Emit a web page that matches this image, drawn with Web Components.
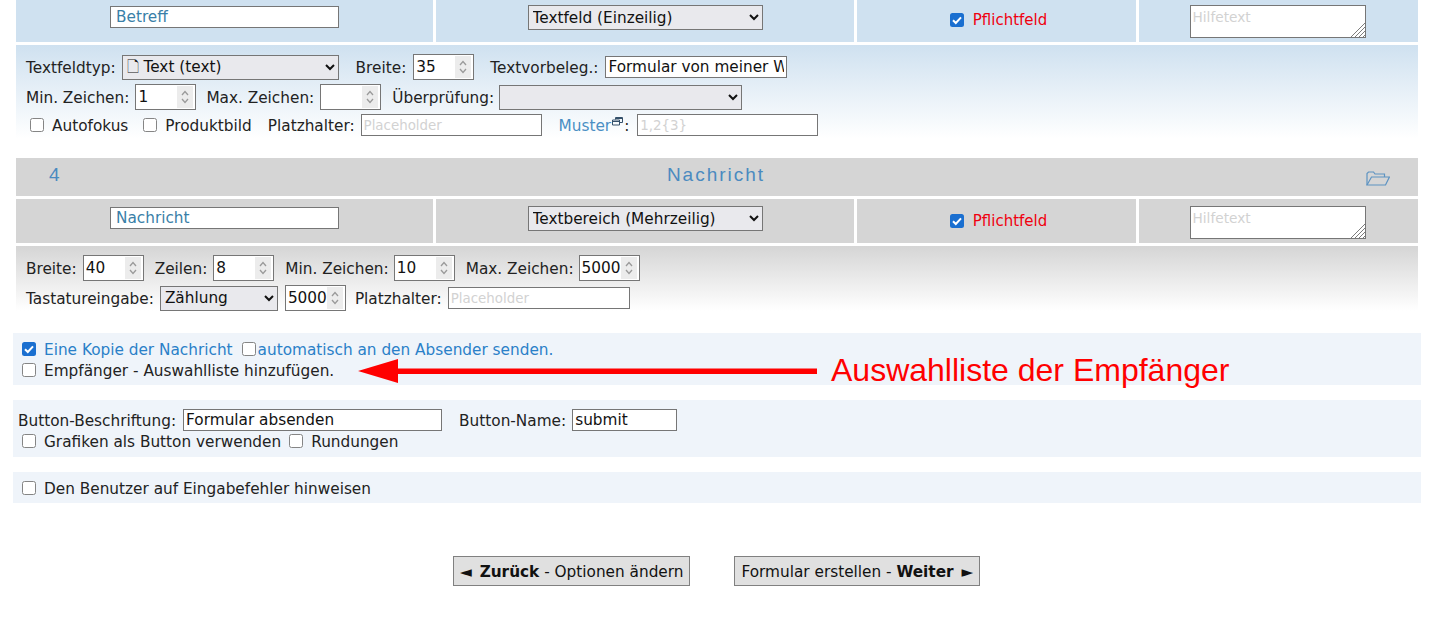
<!DOCTYPE html>
<html lang="de">
<head>
<meta charset="utf-8">
<title>Formular</title>
<style>
  html, body { margin: 0; padding: 0; background: #fff; overflow: hidden; }
  body { font: 15.3px/18px "DejaVu Sans", Verdana, sans-serif; color: #222; }
  .tri { margin: 0 3px; }
  .tri:first-child { margin-left: 0; }
  .tri:last-child { margin-right: 0; }
</style>
</head>
<body>
<form-page>
  <field-row name="Betreff" type="Textfeld (Einzeilig)" tone="#cfe1f0"></field-row>
  <field-panel tone="#cfe1f0" height="110" top="9">
    <panel-line>
      <span>Textfeldtyp:</span>
      <plain-select width="217" options="🗋 Text (text)"></plain-select>
      <span class="s17">Breite:</span>
      <num-field class="s7" value="35"></num-field>
      <span class="s16">Textvorbeleg.:</span>
      <plain-text class="s7" width="182" value="Formular von meiner Website"></plain-text>
    </panel-line>
    <panel-line>
      <span>Min. Zeichen:</span>
      <num-field value="1"></num-field>
      <span class="s10">Max. Zeichen:</span>
      <num-field value=""></num-field>
      <span class="s11">Überprüfung:</span>
      <plain-select class="s5" width="243" options=""></plain-select>
    </panel-line>
    <panel-line>
      <check-label class="i4">Autofokus</check-label>
      <check-label class="s15">Produktbild</check-label>
      <span class="s16">Platzhalter:</span>
      <plain-text width="181" placeholder="Placeholder"></plain-text>
      <span class="s17"><link-text>Muster</link-text><window-icon></window-icon>:</span>
      <plain-text class="s8" width="181" placeholder="1,2{3}"></plain-text>
    </panel-line>
  </field-panel>

  <section-head number="4" title="Nachricht"></section-head>
  <field-row name="Nachricht" type="Textbereich (Mehrzeilig)" tone="#d5d5d5"></field-row>
  <field-panel tone="#d5d5d5" height="76" top="9">
    <panel-line>
      <span>Breite:</span>
      <num-field value="40"></num-field>
      <span class="s11">Zeilen:</span>
      <num-field value="8"></num-field>
      <span class="s11">Min. Zeichen:</span>
      <num-field class="s5" value="10"></num-field>
      <span class="s11">Max. Zeichen:</span>
      <num-field class="s5" value="5000"></num-field>
    </panel-line>
    <panel-line>
      <span>Tastatureingabe:</span>
      <plain-select width="118" options="Zählung"></plain-select>
      <num-field class="s7" value="5000"></num-field>
      <span class="s9">Platzhalter:</span>
      <plain-text width="182" placeholder="Placeholder"></plain-text>
    </panel-line>
  </field-panel>

  <option-box style="--box-top:11px;--box-height:52px;--box-pad:5px">
    <panel-line tight>
      <check-label checked blue>Eine Kopie der Nachricht</check-label>
      <check-label class="s9" blue narrow>automatisch an den Absender senden.</check-label>
    </panel-line>
    <panel-line tight>
      <check-label>Empfänger - Auswahlliste hinzufügen.</check-label>
    </panel-line>
  </option-box>

  <option-box style="--box-top:15px;--box-height:57px;--box-pad:9px">
    <panel-line tight>
      <span class="lead">Button-Beschriftung:</span>
      <plain-text class="s7" width="259" value="Formular absenden"></plain-text>
      <span class="s17">Button-Name:</span>
      <plain-text width="105" value="submit"></plain-text>
    </panel-line>
    <panel-line tight>
      <check-label>Grafiken als Button verwenden</check-label>
      <check-label class="s8">Rundungen</check-label>
    </panel-line>
  </option-box>

  <option-box style="--box-top:15px;--box-height:31px;--box-pad:5px">
    <panel-line tight>
      <check-label>Den Benutzer auf Eingabefehler hinweisen</check-label>
    </panel-line>
  </option-box>

  <nav-bar>
    <nav-button><span class="tri">◄</span> <b>Zurück</b> - Optionen ändern</nav-button>
    <nav-button>Formular erstellen - <b>Weiter</b> <span class="tri">►</span></nav-button>
  </nav-bar>

  <callout-arrow>Auswahlliste der Empfänger</callout-arrow>
</form-page>

<script>
// shared look of the checkboxes, the old Chromium style with the heavy grey edge
const CHECK_CSS = `
  input[type=checkbox] {
    appearance: none; box-sizing: border-box; width: 14px; height: 14px; margin: 0; flex: none;
    border: 1.5px solid #858585; border-radius: 2.500px; background: #fff;
  }
  input[type=checkbox]:checked {
    border: 0;
    background: #1a6fd0 url("data:image/svg+xml,%3Csvg xmlns='http://www.w3.org/2000/svg' viewBox='0 0 14 14'%3E%3Cpath d='M3 7.200l2.800 2.800L11 4.300' fill='none' stroke='%23fff' stroke-width='2'/%3E%3C/svg%3E");
  }`;

class FormPage extends HTMLElement {
  constructor() {
    super();
    this.attachShadow({ mode: "open" }).innerHTML = `
      <style>
        :host { display: block; position: relative; margin-top: -2px; }
      </style>
      <slot></slot>`;
  }
}

class FieldRow extends HTMLElement {
  constructor() {
    super();
    const tone = this.getAttribute("tone");
    this.attachShadow({ mode: "open" }).innerHTML = `
      <style>
        :host {
          display: grid;
          grid-template-columns: 417px 418px 279px 279px;
          column-gap: 3px;
          margin: 0 0 3px 16px;
          width: 1402px;
          height: 44px;
          font: 15.3px/18px "DejaVu Sans", Verdana, sans-serif;
        }
        .cell { background: ${tone}; display: flex; justify-content: center; align-items: flex-start; padding-top: 7px; box-sizing: border-box; }
        input[type=text] {
          width: 229px; height: 22px; box-sizing: border-box; margin: 1px 0 0;
          border: 1px solid #767676; padding: 1px 5px; background: #fff;
          font: inherit; color: #3a7fa8; outline: 0;
        }
        select {
          width: 235px; height: 25px; box-sizing: border-box; margin: 0;
          border: 1px solid #767676; border-radius: 0; background-color: #e9e9ed;
          font: inherit; color: #111; padding-left: 0;
        }
        .req { padding-top: 13px; padding-left: 4px; color: #f0000f; font-size: 15px; }
        .req label { display: flex; align-items: center; gap: 9px; }
        ${CHECK_CSS}
        .help { padding-right: 2px; }
        .note { position: relative; height: 33px; }
        textarea {
          display: block; width: 176px; height: 33px; box-sizing: border-box; margin: 0;
          border: 1px solid #767676; padding: 3px 2px 2px 2px; background: #fff; resize: none;
          font: 13.7px/17px "DejaVu Sans", Verdana, sans-serif; outline: 0;
        }
        textarea::placeholder { color: #d2d2d2; }
        .grip { position: absolute; right: 1px; bottom: 1px; display: block; }
      </style>
      <div class="cell"><input type="text" value="${this.getAttribute("name")}"></div>
      <div class="cell"><select><option>${this.getAttribute("type")}</option></select></div>
      <div class="cell req"><label><input type="checkbox" checked>Pflichtfeld</label></div>
      <div class="cell help"><div class="note">
        <textarea placeholder="Hilfetext"></textarea>
        <svg class="grip" width="15" height="15" viewBox="0 0 15 15" stroke="#7c7c7c" stroke-width="1">
          <path d="M1 15L15 1M5 15L15 5M9 15l6-6M13 15l2-2"/>
        </svg>
      </div></div>`;
  }
}

class FieldPanel extends HTMLElement {
  constructor() {
    super();
    const tone = this.getAttribute("tone");
    this.attachShadow({ mode: "open" }).innerHTML = `
      <style>
        :host {
          display: flex; flex-direction: column; gap: 4px;
          box-sizing: border-box;
          margin: 0 0 3px 16px; width: 1402px;
          height: ${this.getAttribute("height")}px;
          padding: ${this.getAttribute("top")}px 0 0 10px;
          background: linear-gradient(${tone}, #fff 85%);
        }
      </style>
      <slot></slot>`;
  }
}

// one line of labels and fields; the gap before an item comes from its s-number class
class PanelLine extends HTMLElement {
  constructor() {
    super();
    this.attachShadow({ mode: "open" }).innerHTML = `
      <style>
        :host { display: flex; align-items: center; min-height: 22px; }
        :host([tight]:not(:first-child)) { margin-top: -1px; }
        ::slotted(*) { flex: none; margin-left: 6px; }
        ::slotted(span) { padding-top: 2px; }
        ::slotted(:first-child) { margin-left: 0; }
        ::slotted(.lead) { margin-left: -4px; }
        ::slotted(.i4) { margin-left: 4px; }
        ::slotted(.s5) { margin-left: 5px; }
        ::slotted(.s7) { margin-left: 7px; }
        ::slotted(.s8) { margin-left: 8px; }
        ::slotted(.s9) { margin-left: 9px; }
        ::slotted(.s10) { margin-left: 10px; }
        ::slotted(.s11) { margin-left: 11px; }
        ::slotted(.s15) { margin-left: 15px; }
        ::slotted(.s16) { margin-left: 16px; }
        ::slotted(.s17) { margin-left: 17px; }
      </style>
      <slot></slot>`;
  }
}

class PlainSelect extends HTMLElement {
  constructor() {
    super();
    const label = this.getAttribute("options");
    this.attachShadow({ mode: "open" }).innerHTML = `
      <style>
        :host { display: block; }
        select {
          display: block; box-sizing: border-box; margin: 0;
          width: ${this.getAttribute("width")}px; height: 25px;
          border: 1px solid #767676; border-radius: 0; background-color: #e9e9ed;
          font: 15.3px "DejaVu Sans", Verdana, sans-serif; color: #111; padding-left: 0;
        }
      </style>
      <select><option>${label}</option></select>`;
  }
}

class PlainText extends HTMLElement {
  constructor() {
    super();
    const value = this.getAttribute("value") || "";
    const hint = this.getAttribute("placeholder") || "";
    this.attachShadow({ mode: "open" }).innerHTML = `
      <style>
        :host { display: block; }
        input {
          display: block; box-sizing: border-box; margin: 0;
          width: ${this.getAttribute("width")}px; height: 22px;
          border: 1px solid #767676; padding: 1px 2px; background: #fff;
          font: 15.3px "DejaVu Sans", Verdana, sans-serif; color: #111; outline: 0;
        }
        input::placeholder { color: #d2d2d2; font-size: 13.4px; }
      </style>
      <input type="text" value="${value}" placeholder="${hint}">`;
  }
}

class NumField extends HTMLElement {
  constructor() {
    super();
    this.attachShadow({ mode: "open" }).innerHTML = `
      <style>
        :host {
          display: flex; box-sizing: border-box; width: 61px; height: 26px;
          border: 1px solid #767676; background: #fff; padding: 1px 2px;
        }
        input {
          flex: 1; min-width: 0; border: 0; padding: 0; margin: 0; background: none; outline: 0;
          font: 15.3px "DejaVu Sans", Verdana, sans-serif; color: #111;
        }
        svg { flex: none; width: 16px; height: 22px; background: #ececec; }
      </style>
      <input type="text" value="${this.getAttribute("value")}">
      <svg viewBox="0 0 16 22" fill="none" stroke="#9a9a9a" stroke-width="1.3">
        <path d="M5 9l3-3.500 3 3.500M5 13l3 3.500 3-3.500"/>
      </svg>`;
  }
}

class CheckLabel extends HTMLElement {
  constructor() {
    super();
    const gap = this.hasAttribute("narrow") ? 2 : 8;
    this.attachShadow({ mode: "open" }).innerHTML = `
      <style>
        :host { display: block; color: ${this.hasAttribute("blue") ? "#2a80c8" : "inherit"}; }
        label { display: flex; align-items: center; gap: ${gap}px; }
        ${CHECK_CSS}
        span { padding-top: 2px; }
      </style>
      <label><input type="checkbox" ${this.hasAttribute("checked") ? "checked" : ""}><span><slot></slot></span></label>`;
  }
}

class LinkText extends HTMLElement {
  constructor() {
    super();
    this.attachShadow({ mode: "open" }).innerHTML = `
      <style>:host { color: #4a8fc4; }</style><slot></slot>`;
  }
}

class WindowIcon extends HTMLElement {
  constructor() {
    super();
    this.attachShadow({ mode: "open" }).innerHTML = `
      <style>:host { display: inline-block; width: 11px; height: 9px; margin: 0 1px; vertical-align: 5px; }
        svg { display: block; }</style>
      <svg width="11" height="9" viewBox="0 0 11 9" fill="none" stroke="#34506a" stroke-width="1">
        <path d="M3.500 2.500v-2h7v5h-2.500"/><path d="M.5 3h7v5h-7z"/><path d="M.5 4.500h7M3.500 1.500h7"/>
      </svg>`;
  }
}

class SectionHead extends HTMLElement {
  constructor() {
    super();
    this.attachShadow({ mode: "open" }).innerHTML = `
      <style>
        :host {
          display: grid; grid-template-columns: 1fr auto 1fr; align-items: center;
          box-sizing: border-box; margin: 0 0 3px 16px; width: 1402px; height: 38px;
          background: #d5d5d5; color: #4a8ac0;
          font: 19px "Liberation Sans", Arial, sans-serif;
        }
        .num { padding-left: 33px; margin-top: -4px; }
        .title { letter-spacing: 2px; margin-top: -4px; margin-right: 2px; }
        .tools { justify-self: end; padding-right: 28px; padding-top: 2px; }
        svg { display: block; }
      </style>
      <div class="num">${this.getAttribute("number")}</div>
      <div class="title">${this.getAttribute("title")}</div>
      <div class="tools">
        <svg width="24" height="15" viewBox="0 0 24 15" fill="none" stroke="#5d93c2" stroke-width="1.2">
          <path d="M1 14V2.500L2.500 1h5L9 3h9.500v3"/>
          <path d="M1 14l4.500-8H23.400L19.500 14z"/>
        </svg>
      </div>`;
  }
}

class OptionBox extends HTMLElement {
  constructor() {
    super();
    this.attachShadow({ mode: "open" }).innerHTML = `
      <style>
        :host {
          display: block; box-sizing: border-box;
          margin: var(--box-top) 0 0 13px; width: 1408px;
          height: var(--box-height); padding: var(--box-pad) 0 0 9px;
          background: #eff4fa;
        }
      </style>
      <slot></slot>`;
  }
}

class NavBar extends HTMLElement {
  constructor() {
    super();
    this.attachShadow({ mode: "open" }).innerHTML = `
      <style>
        :host { display: flex; gap: 44px; margin: 53px 0 0 453px; }
      </style>
      <slot></slot>`;
  }
}

class NavButton extends HTMLElement {
  constructor() {
    super();
    this.attachShadow({ mode: "open" }).innerHTML = `
      <style>
        :host { display: block; }
        button {
          display: block; box-sizing: border-box; height: 30px; margin: 0; padding: 2px 6px 0;
          border: 1px solid #808080; border-radius: 0; background: #e0e0e0; color: #111;
          font: 15.3px "DejaVu Sans", Verdana, sans-serif; white-space: nowrap;
        }
      </style>
      <button type="button"><slot></slot></button>`;
  }
}

class CalloutArrow extends HTMLElement {
  constructor() {
    super();
    this.attachShadow({ mode: "open" }).innerHTML = `
      <style>
        :host {
          position: absolute; left: 358px; top: 348px; display: flex; align-items: center;
          color: #f00; font: 32px/48px "Liberation Sans", Arial, sans-serif; white-space: nowrap;
        }
        svg { display: block; margin-right: 14px; margin-top: 2px; }
      </style>
      <svg width="459" height="26" viewBox="0 0 459 26" fill="#f00">
        <path d="M0 13L40 1v9.500h419v5.500H40V25z"/>
      </svg>
      <span><slot></slot></span>`;
  }
}

customElements.define("form-page", FormPage);
customElements.define("field-row", FieldRow);
customElements.define("field-panel", FieldPanel);
customElements.define("panel-line", PanelLine);
customElements.define("plain-select", PlainSelect);
customElements.define("plain-text", PlainText);
customElements.define("num-field", NumField);
customElements.define("check-label", CheckLabel);
customElements.define("link-text", LinkText);
customElements.define("window-icon", WindowIcon);
customElements.define("section-head", SectionHead);
customElements.define("option-box", OptionBox);
customElements.define("nav-bar", NavBar);
customElements.define("nav-button", NavButton);
customElements.define("callout-arrow", CalloutArrow);
</script>
</body>
</html>
